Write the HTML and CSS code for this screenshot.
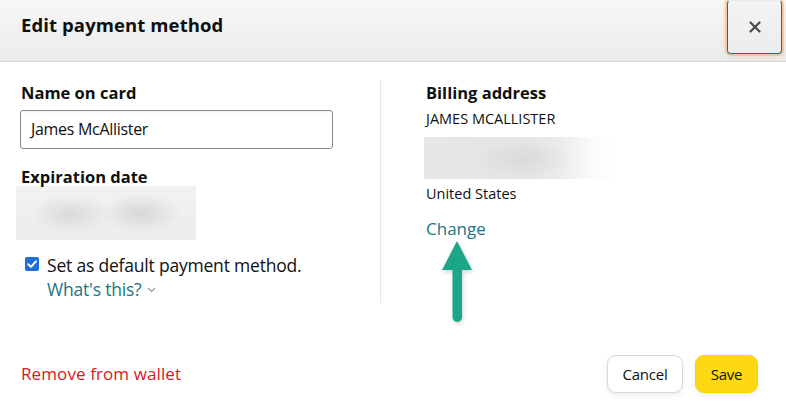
FILE: index.html
```html
<!DOCTYPE html>
<html lang="en">
<head>
<meta charset="utf-8">
<title>Edit payment method</title>
<link rel="stylesheet" href="styles.css">
</head>
<body>
<div class="modal">
  <header class="header">
    <h1 class="title">Edit payment method</h1>
    <button class="close" aria-label="Close">
      <svg width="12" height="12" viewBox="0 0 12 12"><path d="M1.5 1.5 L10.5 10.5 M10.5 1.5 L1.5 10.5" stroke="#4a4a4a" stroke-width="2.2" stroke-linecap="round"/></svg>
    </button>
  </header>

  <div class="body">
    <div class="col-left">
      <div class="label name-label">Name on card</div>
      <div class="input">James McAllister</div>
      <div class="label exp-label">Expiration date</div>
      <div class="blur-exp"></div>
      <div class="check-row">
        <span class="checkbox">
          <svg width="14" height="14" viewBox="0 0 14 14"><path d="M3.2 7.2 L6 9.9 L10.9 4.3" fill="none" stroke="#fff" stroke-width="2" stroke-linecap="round" stroke-linejoin="round"/></svg>
        </span>
        <div class="check-text">
          <div class="check-label">Set as default payment method.</div>
          <div class="whats">What's this?
            <svg class="chev" width="9" height="6" viewBox="0 0 9 6"><path d="M1 1 L4.5 4.5 L8 1" fill="none" stroke="#9a9a9a" stroke-width="1.2"/></svg>
          </div>
        </div>
      </div>
    </div>
    <div class="col-right">
      <div class="label billing-label">Billing address</div>
      <div class="addr-name">JAMES MCALLISTER</div>
      <div class="blur-addr"></div>
      <div class="country">United States</div>
      <div class="change">Change</div>
    </div>
  </div>

  <footer class="footer">
    <span class="remove">Remove from wallet</span>
    <div class="buttons">
      <button class="btn cancel">Cancel</button>
      <button class="btn save">Save</button>
    </div>
  </footer>

  <svg class="arrow" width="36" height="86" viewBox="0 0 36 86">
    <polygon points="17,1 32,30 2,30" fill="#1ca587"/>
    <rect x="12.5" y="26" width="9.5" height="56" rx="4.75" fill="#1ca587"/>
  </svg>
</div>
</body>
</html>
```

FILE: styles.css
```css
* { box-sizing: border-box; }
html, body { margin: 0; padding: 0; background: #fff; }
body {
  font-family: "Open Sans", "Liberation Sans", Arial, sans-serif;
  color: #0f1111;
}
.modal {
  position: relative;
  width: 786px;
  height: 403px;
  display: flex;
  flex-direction: column;
  overflow: hidden;
}
.header {
  height: 62px;
  flex: none;
  display: flex;
  justify-content: space-between;
  align-items: flex-start;
  background: linear-gradient(#f7f7f7, #ebebeb);
  border-bottom: 1px solid #d5d5d5;
  padding-left: 21px;
  padding-right: 4px;
}
.title {
  margin: 0;
  font-size: 18.5px;
  font-weight: 700;
  line-height: 24px;
  padding-top: 13px;
  letter-spacing: 0.1px;
}
.close {
  width: 55px;
  height: 54px;
  margin: 0;
  padding: 0;
  display: flex;
  align-items: center;
  justify-content: center;
  background: linear-gradient(#f3f3f3, #ececec);
  border: 1px solid #1e6f7d;
  border-radius: 4px;
  box-shadow: 0 0 0 2px rgba(245, 180, 120, 0.55), 0 0 4px 2px rgba(240, 170, 100, 0.35);
  border-top-color: transparent;
}
.body {
  margin-top: 18px;
  height: 223px;
  flex: none;
  display: flex;
  padding-left: 21px;
}
.col-left {
  width: 359px;
  padding-top: 1px;
}
.col-right {
  border-left: 1px solid #e7e7e7;
  padding-left: 45px;
  padding-top: 1px;
}
.label {
  font-size: 16.5px;
  font-weight: 700;
  line-height: 24px;
  letter-spacing: 0;
}
.input {
  margin-top: 5px;
  width: 313px;
  margin-left: -1px;
  height: 39px;
  border: 1px solid #888c8c;
  border-radius: 3px;
  font-size: 16px;
  line-height: 20px;
  padding: 8px 10px;
  letter-spacing: -0.3px;
  box-shadow: inset 0 1px 2px rgba(15, 17, 17, 0.08);
}
.exp-label {
  margin-top: 16px;
}
.blur-exp {
  margin-top: -3px;
  margin-left: -5px;
  width: 180px;
  height: 54px;
  background:
    radial-gradient(ellipse 40px 20px at 55px 28px, rgba(200,200,200,0.55), rgba(200,200,200,0) 100%),
    radial-gradient(ellipse 40px 20px at 125px 27px, rgba(195,195,195,0.55), rgba(195,195,195,0) 100%),
    linear-gradient(#f2f2f2, #ececec);
}
.check-row {
  margin-top: 13px;
  display: flex;
  padding-left: 4px;
}
.checkbox {
  width: 14px;
  height: 14px;
  margin-top: 4px;
  border-radius: 2px;
  background: #1a6fd8;
  display: flex;
  flex: none;
}
.check-text {
  margin-left: 8px;
  font-size: 17.5px;
  line-height: 24px;
  letter-spacing: -0.2px;
}
.whats {
  color: #1a7585;
  display: flex;
  align-items: center;
}
.chev {
  margin-left: 6px;
  margin-top: 2px;
}
.addr-name {
  margin-top: 4px;
  font-size: 14.5px;
  letter-spacing: 0;
  line-height: 20px;
}
.blur-addr {
  margin-top: 8px;
  margin-left: -2px;
  width: 190px;
  height: 42px;
  background:
    radial-gradient(ellipse 50px 18px at 100px 22px, rgba(205,205,205,0.45), rgba(205,205,205,0) 100%),
    linear-gradient(to right, #e7e7e7 0%, #e4e4e4 55%, #ececec 72%, #fafafa 88%, #ffffff 100%);
}
.country {
  margin-top: 5px;
  font-size: 14.5px;
  line-height: 20px;
  letter-spacing: 0;
}
.change {
  margin-top: 13px;
  font-size: 17px;
  line-height: 24px;
  color: #1a7585;
  letter-spacing: 0;
}
.footer {
  margin-top: 52px;
  flex: none;
  display: flex;
  justify-content: space-between;
  align-items: center;
  padding-left: 21px;
  padding-right: 28px;
}
.remove {
  font-size: 17px;
  line-height: 24px;
  color: #d8161e;
  letter-spacing: 0.1px;
}
.buttons {
  display: flex;
  gap: 12px;
}
.btn {
  height: 38px;
  margin: 0;
  font-family: "Open Sans", "Liberation Sans", Arial, sans-serif;
  font-size: 15px;
  color: #0f1111;
  border-radius: 9px;
  padding: 0;
  letter-spacing: -0.2px;
}
.cancel {
  width: 76px;
  background: #fff;
  border: 1px solid #d5d9d9;
  box-shadow: 0 2px 5px rgba(213, 217, 217, 0.5);
}
.save {
  width: 63px;
  background: #ffd814;
  border: 1px solid #fcd200;
  box-shadow: 0 2px 5px rgba(213, 217, 217, 0.5);
}
.arrow {
  position: absolute;
  left: 440px;
  top: 240px;
  filter: drop-shadow(1px 2px 2px rgba(0, 0, 0, 0.18));
}
```
